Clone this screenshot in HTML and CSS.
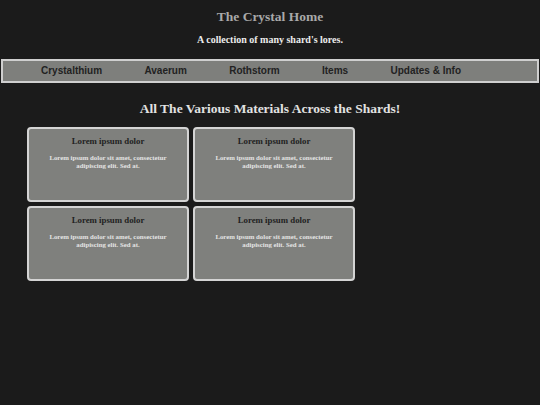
FILE: index.html
```html
<!DOCTYPE html>
<html>
<head>
<meta charset="utf-8">
<link rel="stylesheet" href="styles.css">
</head>
<body>
<header class="site-header">
  <h1 class="site-title">The Crystal Home</h1>
  <p class="site-sub">A collection of many shard's lores.</p>
</header>
<nav class="main-nav">
  <a class="nav-link" href="#">Crystalthium</a>
  <a class="nav-link" href="#">Avaerum</a>
  <a class="nav-link" href="#">Rothstorm</a>
  <a class="nav-link" href="#">Items</a>
  <a class="nav-link" href="#">Updates &amp; Info</a>
</nav>
<main class="content">
  <h2 class="section-title">All The Various Materials Across the Shards!</h2>
  <div class="card-grid">
    <div class="card">
      <h3 class="card-title">Lorem ipsum dolor</h3>
      <p class="card-text">Lorem ipsum dolor sit amet, consectetur adipiscing elit. Sed at.</p>
    </div>
    <div class="card">
      <h3 class="card-title">Lorem ipsum dolor</h3>
      <p class="card-text">Lorem ipsum dolor sit amet, consectetur adipiscing elit. Sed at.</p>
    </div>
    <div class="card">
      <h3 class="card-title">Lorem ipsum dolor</h3>
      <p class="card-text">Lorem ipsum dolor sit amet, consectetur adipiscing elit. Sed at.</p>
    </div>
    <div class="card">
      <h3 class="card-title">Lorem ipsum dolor</h3>
      <p class="card-text">Lorem ipsum dolor sit amet, consectetur adipiscing elit. Sed at.</p>
    </div>
  </div>
</main>
</body>
</html>
```
FILE: styles.css
```css
html, body {
  margin: 0;
  padding: 0;
  background: #1b1b1b;
  font-family: "Liberation Serif", "Times New Roman", serif;
}

.site-header {
  text-align: center;
  padding-top: 9px;
}

.site-title {
  margin: 0;
  font-size: 13.5px;
  line-height: 16px;
  font-weight: bold;
  color: #a9a9a9;
}

.site-sub {
  margin: 9px 0 0;
  font-size: 10px;
  line-height: 12px;
  font-weight: bold;
  color: #ececec;
}

.main-nav {
  margin: 13px 1px 0;
  border: 2px solid #cfcfcf;
  background: #7e7f7c;
  height: 20px;
  display: flex;
  align-items: center;
  gap: 42.3px;
  padding-left: 38px;
}

.nav-link {
  font-family: "Liberation Sans", Arial, sans-serif;
  font-size: 10px;
  line-height: 20px;
  font-weight: bold;
  color: #222;
  text-decoration: none;
}

.content {
  padding-top: 18px;
}

.section-title {
  margin: 0;
  text-align: center;
  font-size: 13.5px;
  line-height: 16px;
  font-weight: bold;
  color: #e2e2e2;
}

.card-grid {
  margin: 10px 0 0 27px;
  display: grid;
  grid-template-columns: 162px 162px;
  grid-auto-rows: 75px;
  gap: 4px;
}

.card {
  box-sizing: border-box;
  border: 2px solid #d4d4d4;
  border-radius: 4px;
  background: #7f807d;
  padding: 7px 10px 0;
  text-align: center;
}

.card-title {
  margin: 0;
  font-size: 8.8px;
  line-height: 10px;
  font-weight: bold;
  color: #222;
}

.card-text {
  margin: 8px 0 0;
  font-size: 6.8px;
  line-height: 7.5px;
  font-weight: bold;
  color: #e4e4e4;
}
```
